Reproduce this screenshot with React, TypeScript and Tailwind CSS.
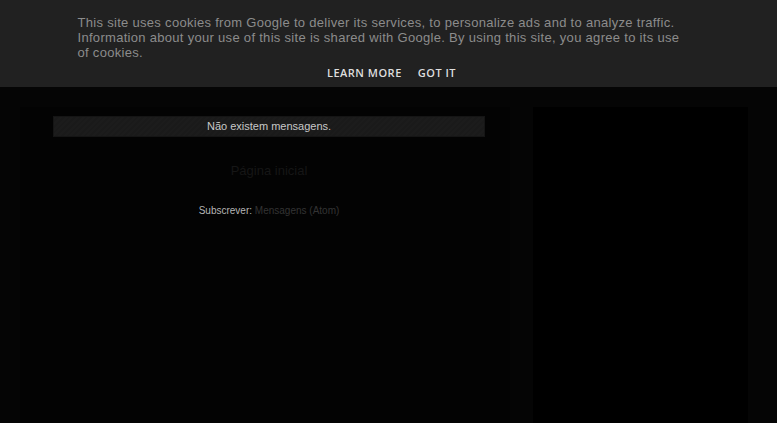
import React from "react";

const stripes =
  "bg-[repeating-linear-gradient(135deg,#1c1c1c_0px,#1c1c1c_2px,#1a1a1a_2px,#1a1a1a_4px)]";

const CookieBar = () => (
  <div className="absolute left-0 top-0 z-10 w-full h-[87px] bg-[#212121] font-['Liberation_Sans',sans-serif]">
    <div className="mx-auto w-[622px] pt-[15px] text-[13px] leading-[15px] tracking-[0.3px] text-[#8c8c8c]">
      This site uses cookies from Google to deliver its services, to personalize ads and to analyze traffic.
      <br />
      Information about your use of this site is shared with Google. By using this site, you agree to its use
      <br />
      of cookies.
    </div>
    <div className="mt-[5px] flex justify-center gap-4 pl-[6px] font-['Open_Sans',sans-serif] text-[11px] font-semibold tracking-[0.5px] text-[#dedede]">
      <a>LEARN MORE</a>
      <a>GOT IT</a>
    </div>
  </div>
);

export default function App() {
  return (
    <div className="relative min-h-[423px] w-full overflow-hidden bg-[#050505] font-['Liberation_Sans',sans-serif]">
      <CookieBar />
      <div className="flex pt-[107px]">
        <main className="ml-[20px] w-[490px] bg-[#030303] min-h-[316px]">
          <div className={`ml-[33px] mt-[9px] w-[432px] h-[21px] flex items-center justify-center border border-[#151515] ${stripes}`}>
            <span className="text-[11px] text-[#c8c8c8]">Não existem mensagens.</span>
          </div>
          <div className="mt-[21px] w-[432px] ml-[33px] text-center">
            <a className="text-[13px] text-[#161616]">Página inicial</a>
          </div>
          <div className="mt-[21px] w-[432px] ml-[33px] text-center text-[10px] text-[#b5b5b5]">
            <span>Subscrever: </span>
            <a className="text-[#333333]">Mensagens (Atom)</a>
          </div>
        </main>
        <aside className="ml-[23px] w-[215px] min-h-[316px] bg-black" />
      </div>
    </div>
  );
}
